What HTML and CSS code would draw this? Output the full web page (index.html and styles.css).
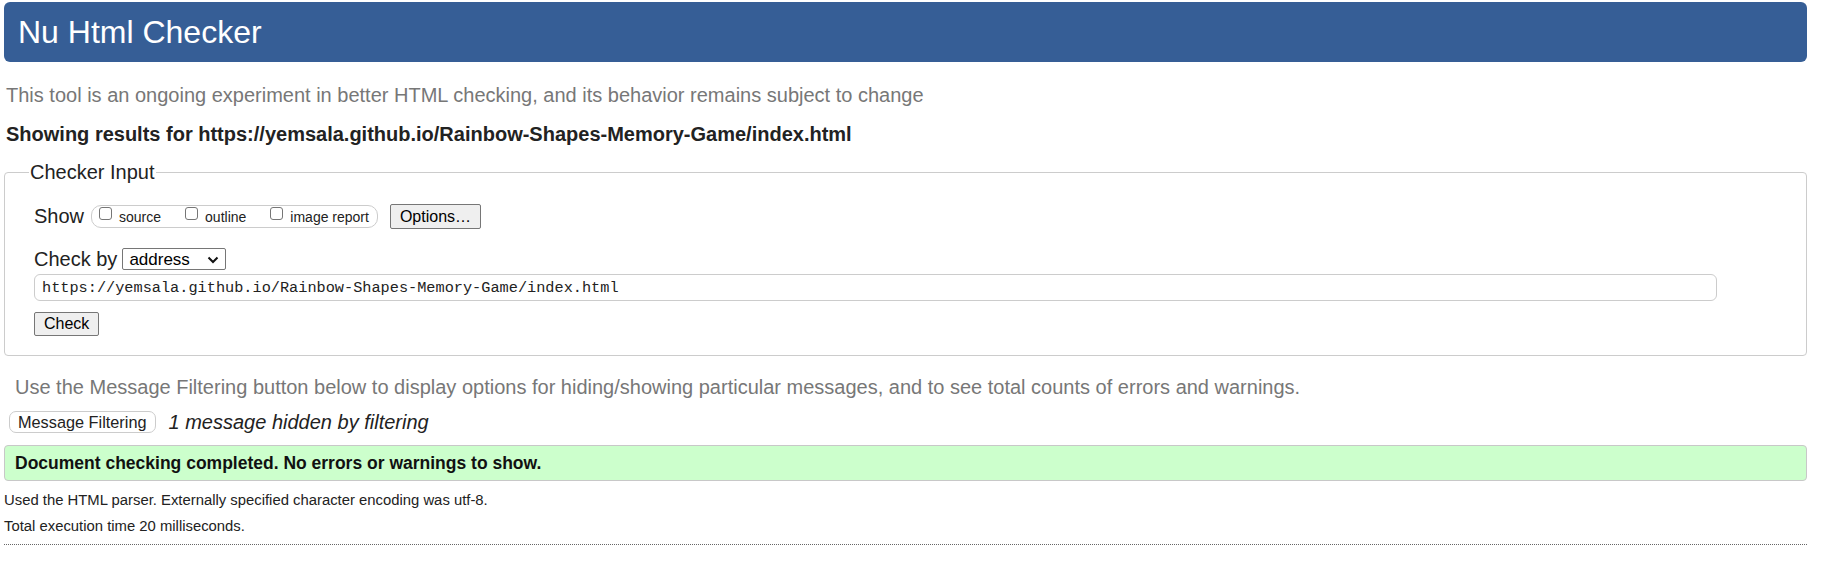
FILE: index.html
```html
<!DOCTYPE html>
<html lang="en">
<head>
<meta charset="utf-8">
<title>Nu Html Checker</title>
<link rel="stylesheet" href="styles.css">
</head>
<body>
<h1 class="title">Nu Html Checker</h1>
<p class="intro">This tool is an ongoing experiment in better HTML checking, and its behavior remains subject to change</p>
<p class="showing">Showing results for https://yemsala.github.io/Rainbow-Shapes-Memory-Game/index.html</p>
<form class="checker">
  <fieldset class="checker-input">
    <legend class="legend">Checker Input</legend>
    <div class="show-row">
      <span class="row-label">Show</span>
      <span class="options-group">
        <label class="opt"><input type="checkbox" class="cb"><span class="opt-text">source</span></label>
        <label class="opt"><input type="checkbox" class="cb"><span class="opt-text">outline</span></label>
        <label class="opt last"><input type="checkbox" class="cb"><span class="opt-text">image report</span></label>
      </span>
      <button type="button" class="btn btn-options">Options…</button>
    </div>
    <div class="checkby-row">
      <span class="row-label">Check by</span>
      <span class="select-wrap">
        <select class="select"><option>address</option></select>
        <svg class="chev" width="12" height="8" viewBox="0 0 12 8"><path d="M1.5 1.5 L6 6 L10.5 1.5" fill="none" stroke="#111" stroke-width="2"/></svg>
      </span>
    </div>
    <input class="url" type="text" value="https://yemsala.github.io/Rainbow-Shapes-Memory-Game/index.html">
    <div class="check-row"><button type="button" class="btn btn-check">Check</button></div>
  </fieldset>
</form>
<p class="filter-info">Use the Message Filtering button below to display options for hiding/showing particular messages, and to see total counts of errors and warnings.</p>
<div class="filter-row">
  <button type="button" class="btn-filter">Message Filtering</button>
  <span class="hidden-note">1 message hidden by filtering</span>
</div>
<div class="success">Document checking completed. No errors or warnings to show.</div>
<p class="meta first">Used the HTML parser. Externally specified character encoding was utf-8.</p>
<p class="meta">Total execution time 20 milliseconds.</p>
<hr class="rule">
</body>
</html>
```
FILE: styles.css
```css
* { box-sizing: border-box; }
body {
  margin: 0;
  padding: 2px 25px 0 4px;
  font-family: "Liberation Sans", Arial, sans-serif;
  color: #222;
  background: #fff;
}
.title {
  margin: 0;
  height: 60px;
  line-height: 60px;
  padding-left: 14px;
  background: #365e96;
  color: #fff;
  font-size: 32px;
  font-weight: normal;
  border-radius: 6px;
}
.intro {
  margin: 22px 0 0 2px;
  font-size: 20px;
  line-height: 23px;
  color: #777;
}
.showing {
  margin: 16px 0 0 2px;
  font-size: 20px;
  line-height: 23px;
  font-weight: bold;
  color: #222;
}
.checker { margin: 0; }
.checker-input {
  margin: 15px 0 0 0;
  border: 1px solid #ccc;
  border-radius: 4px;
  padding: 0 29px 19px 29px;
  min-width: 0;
}
.legend {
  font-size: 20px;
  line-height: 23px;
  padding: 0 1px;
  margin-left: -5px;
  color: #222;
}
.row-label {
  font-size: 20px;
  line-height: 23px;
  color: #222;
}
.show-row {
  display: flex;
  align-items: center;
  height: 25px;
  margin-top: 20px;
}
.options-group {
  display: flex;
  align-items: center;
  height: 23px;
  margin-left: 7px;
  padding: 0 8px 0 7px;
  border: 1px solid #ccc;
  border-radius: 10px;
}
.opt {
  display: flex;
  align-items: center;
  margin-right: 24px;
}
.opt.last { margin-right: 0; }
.cb {
  appearance: none;
  -webkit-appearance: none;
  width: 13px;
  height: 13px;
  margin: 0 0 6px 0;
  border: 1px solid #767676;
  border-radius: 3px;
  background: #fff;
}
.opt-text {
  margin-left: 7px;
  font-size: 14px;
  line-height: 16px;
  color: #222;
}
.btn {
  font-family: "Liberation Sans", Arial, sans-serif;
  font-size: 16px;
  color: #000;
  background: #efefef;
  border: 1px solid #767676;
  border-radius: 2px;
  padding: 0 9px;
}
.btn-options {
  height: 25px;
  margin-left: 12px;
}
.checkby-row {
  display: flex;
  align-items: center;
  margin-top: 19px;
  height: 22px;
}
.select-wrap {
  position: relative;
  display: inline-flex;
  margin-left: 5px;
}
.select {
  appearance: none;
  -webkit-appearance: none;
  width: 104px;
  height: 22px;
  padding: 0 0 0 6px;
  border: 1px solid #767676;
  border-radius: 2px;
  background: #fff;
  font-family: "Liberation Sans", Arial, sans-serif;
  font-size: 17px;
  color: #000;
}
.chev {
  position: absolute;
  right: 7px;
  top: 8px;
  pointer-events: none;
}
.url {
  display: block;
  width: 1683px;
  height: 27px;
  margin-top: 4px;
  padding: 0 7px;
  border: 1px solid #ccc;
  border-radius: 6px;
  font-family: "Liberation Mono", "DejaVu Sans Mono", monospace;
  font-size: 15.25px;
  color: #222;
  background: #fff;
}
.check-row { margin-top: 11px; display: flex; }
.btn-check { height: 24px; }
.filter-info {
  margin: 20px 0 0 11px;
  font-size: 20px;
  line-height: 23px;
  color: #777;
}
.filter-row {
  display: flex;
  align-items: center;
  height: 22px;
  margin-top: 12px;
}
.btn-filter {
  height: 22px;
  margin-left: 5px;
  padding: 0 8px;
  background: #fff;
  border: 1px solid #ccc;
  border-radius: 7px;
  font-family: "Liberation Sans", Arial, sans-serif;
  font-size: 16.3px;
  color: #222;
}
.hidden-note {
  margin-left: 13px;
  font-size: 20px;
  font-style: italic;
  color: #222;
}
.success {
  margin-top: 12px;
  height: 36px;
  line-height: 34px;
  padding: 0 10px;
  background: #ccffcc;
  border: 1px solid #c8c8c8;
  border-radius: 4px;
  font-size: 17.5px;
  font-weight: bold;
  color: #111;
}
.meta {
  margin: 9px 0 0 0;
  font-size: 14.85px;
  line-height: 17px;
  color: #222;
}
.meta.first { margin-top: 11px; }
.rule {
  margin: 9px 0 0 0;
  border: none;
  border-top: 1px dotted #666;
  height: 0;
}
```
